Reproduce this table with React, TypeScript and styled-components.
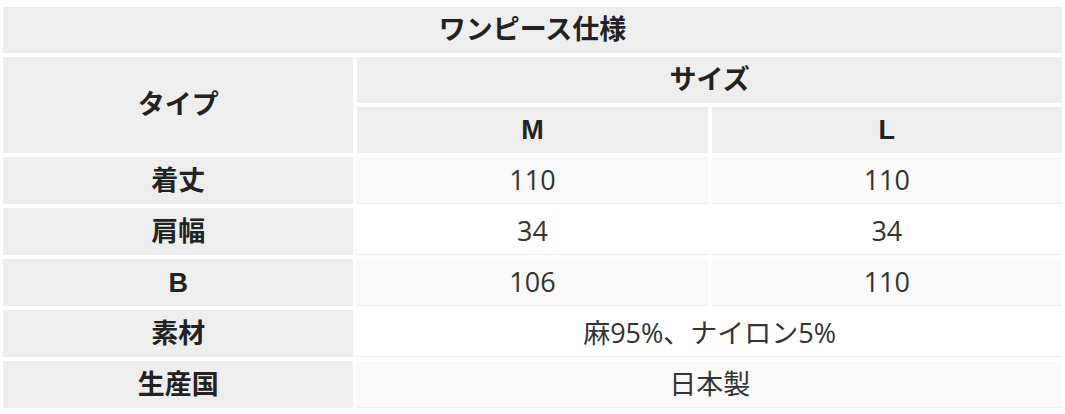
import styled, { createGlobalStyle } from 'styled-components'

const GlobalStyle = createGlobalStyle`
  body {
    margin: 0;
    background: #ffffff;
    font-family: 'Open Sans', 'Noto Sans CJK JP', sans-serif;
    color: #333333;
  }
`

const Wrapper = styled.div`
  width: 1065px;
  padding-top: 3px;
  overflow: hidden;
`

const SpecTable = styled.table`
  width: calc(100% + 2px);
  margin: 0 -1px;
  border-collapse: separate;
  border-spacing: 4px;
  table-layout: fixed;
  font-size: 27px;
`

const HeadCell = styled.th`
  background: #eeeeee;
  color: #222222;
  font-family: 'Liberation Sans', 'Noto Sans CJK JP', sans-serif;
  font-weight: 700;
  text-align: center;
  vertical-align: middle;
  line-height: 30px;
  padding: 8px 10px;
`

const DataCell = styled.td<{ $striped: boolean }>`
  background: ${({ $striped }) => ($striped ? '#f9f9f9' : '#ffffff')};
  border-bottom: 1px solid #eeeeee;
  color: #333333;
  font-weight: 400;
  text-align: center;
  vertical-align: middle;
  line-height: 30px;
  padding: 8px 10px;
`

interface SpecRow {
  label: string
  values: string[]
}

const rows: SpecRow[] = [
  { label: '着丈', values: ['110', '110'] },
  { label: '肩幅', values: ['34', '34'] },
  { label: 'B', values: ['106', '110'] },
  { label: '素材', values: ['麻95%、ナイロン5%'] },
  { label: '生産国', values: ['日本製'] },
]

export default function App() {
  return (
    <>
      <GlobalStyle />
      <Wrapper>
        <SpecTable>
          <thead>
            <tr>
              <HeadCell colSpan={3}>ワンピース仕様</HeadCell>
            </tr>
            <tr>
              <HeadCell rowSpan={2}>タイプ</HeadCell>
              <HeadCell colSpan={2}>サイズ</HeadCell>
            </tr>
            <tr>
              <HeadCell>M</HeadCell>
              <HeadCell>L</HeadCell>
            </tr>
          </thead>
          <tbody>
            {rows.map((row, i) => (
              <tr key={row.label}>
                <HeadCell>{row.label}</HeadCell>
                {row.values.map((value, j) => (
                  <DataCell
                    key={j}
                    $striped={i % 2 === 0}
                    colSpan={row.values.length === 1 ? 2 : 1}
                  >
                    {value}
                  </DataCell>
                ))}
              </tr>
            ))}
          </tbody>
        </SpecTable>
      </Wrapper>
    </>
  )
}
